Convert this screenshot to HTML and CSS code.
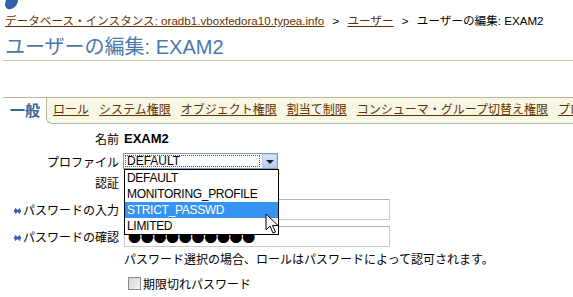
FILE: index.html
```html
<!DOCTYPE html>
<html lang="ja">
<head>
    <meta charset="UTF-8">
    <title>ユーザーの編集: EXAM2</title>
    <link rel="stylesheet" href="styles.css">
</head>
<body>
    <div class="logo-strip">
        <svg width="20" height="10" viewBox="0 0 20 10">
            <path d="M6 0 L18 0 C18 4 15 8 11 9 C8 10 5 8 5 4 Z" fill="#2f62a8"/>
        </svg>
    </div>

    <div class="breadcrumb">
        <a href="#">データベース・インスタンス: oradb1.vboxfedora10.typea.info</a>
        <span class="sep">&gt;</span>
        <a href="#">ユーザー</a>
        <span class="sep">&gt;</span>
        <span>ユーザーの編集: EXAM2</span>
    </div>

    <h1 class="page-title">ユーザーの編集: EXAM2</h1>

    <div class="tabs">
        <div class="tab-current">一般</div>
        <div class="tab-rest">
            <a href="#">ロール</a>
            <a href="#">システム権限</a>
            <a href="#">オブジェクト権限</a>
            <a href="#">割当て制限</a>
            <a href="#">コンシューマ・グループ切替え権限</a>
            <a href="#">プロキシ・ユーザー</a>
        </div>
    </div>

    <div class="user-form">
        <div class="form-row row-name">
            <div class="label">名前</div>
            <div class="value"><b>EXAM2</b></div>
        </div>
        <div class="form-row row-profile">
            <div class="label">プロファイル</div>
            <div class="value">
                <div class="select-box">
                    <div class="select-current">DEFAULT</div>
                    <div class="select-arrow"></div>
                    <ul class="select-list">
                        <li>DEFAULT</li>
                        <li>MONITORING_PROFILE</li>
                        <li class="active">STRICT_PASSWD</li>
                        <li>LIMITED</li>
                    </ul>
                    <!-- mouse pointer over the open list -->
                    <svg class="cursor" width="14" height="22" viewBox="0 0 14 22">
                        <path d="M1 1 L1 17 L5 13 L8 20 L10.5 19 L7.5 12.5 L13 12.5 Z" fill="#fff" stroke="#000" stroke-width="1"/>
                    </svg>
                </div>
            </div>
        </div>
        <div class="form-row row-auth">
            <div class="label">認証</div>
            <div class="value"></div>
        </div>
        <div class="form-row row-pw1">
            <div class="label"><span class="req"><svg width="7" height="6" viewBox="0 0 7 6"><path d="M0 2.3 H7 V3.7 H0 Z M1 0.5 L6 5.5 M6 0.5 L1 5.5" fill="#3b5fc0" stroke="#3b5fc0" stroke-width="1.2"/></svg></span>パスワードの入力</div>
            <div class="value"><div class="text-field"></div></div>
        </div>
        <div class="form-row row-pw2">
            <div class="label"><span class="req"><svg width="7" height="6" viewBox="0 0 7 6"><path d="M0 2.3 H7 V3.7 H0 Z M1 0.5 L6 5.5 M6 0.5 L1 5.5" fill="#3b5fc0" stroke="#3b5fc0" stroke-width="1.2"/></svg></span>パスワードの確認</div>
            <div class="value"><div class="text-field pw-dots">●●●●●●●●●●</div></div>
        </div>
        <div class="form-row row-hint">
            <div class="label"></div>
            <div class="value">パスワード選択の場合、ロールはパスワードによって認可されます。</div>
        </div>
        <div class="form-row row-expire">
            <div class="label"></div>
            <div class="value">
                <label class="check"><input type="checkbox">期限切れパスワード</label>
            </div>
        </div>
    </div>
</body>
</html>
```

FILE: styles.css
```css
body {
    margin: 0;
    font-family: "Liberation Sans", "Noto Sans CJK JP", sans-serif;
    font-size: 12px;
    color: #000;
    background: #fff;
    overflow: hidden;
}
a {
    color: #663300;
}
.logo-strip {
    height: 10px;
    line-height: 0;
}
.breadcrumb {
    padding: 4px 5px 0;
    font-size: 11.6px;
    line-height: 14px;
    white-space: nowrap;
}
.breadcrumb .sep {
    margin: 0 5px;
}
.page-title {
    margin: 7px 0 0 3px;
    padding: 0 0 1px 2px;
    font-size: 20px;
    line-height: 24px;
    font-weight: normal;
    color: #4a78ad;
    border-bottom: 1px solid #c8c5aa;
}
.tabs {
    display: flex;
    margin: 36px 0 0 3px;
    border-top: 1px solid #b8b69a;
    height: 26px;
    white-space: nowrap;
}
.tab-current {
    padding: 3px 6px 0 7px;
    font-size: 15px;
    font-weight: bold;
    color: #336699;
    line-height: 20px;
}
.tab-rest {
    flex: 1;
    display: flex;
    gap: 10px;
    padding: 4px 0 0 6px;
    background: #f7f7e6;
    border-left: 1px solid #b8b69a;
    border-bottom: 1px solid #b8b69a;
    border-bottom-left-radius: 6px;
    line-height: 16px;
    overflow: hidden;
}
.user-form {
    margin-top: 7px;
}
.form-row {
    display: flex;
    align-items: center;
}
.form-row .label {
    width: 119px;
    padding-right: 5px;
    text-align: right;
    white-space: nowrap;
}
.form-row .value {
    white-space: nowrap;
}
.row-name {
    height: 14px;
}
.row-name b {
    font-size: 13px;
}
.row-profile {
    margin-top: 8px;
    height: 16px;
}
.row-auth {
    margin-top: 6px;
    height: 14px;
}
.row-pw1 {
    margin-top: 10px;
}
.row-pw2 {
    margin-top: 6px;
}
.row-hint {
    margin-top: 4px;
    height: 14px;
}
.row-expire {
    margin-top: 11px;
    height: 14px;
}
.req {
    display: inline-block;
    margin-right: 2px;
    vertical-align: 1px;
}
.select-box {
    position: relative;
    width: 153px;
    height: 14px;
    border: 1px solid #7f9db9;
    display: flex;
    margin-left: -1px;
}
.select-current {
    flex: 1;
    margin: 1px 2px 1px 1px;
    border: 1px dotted #555;
    line-height: 10px;
    font-size: 12px;
    padding-left: 1px;
}
.select-arrow {
    width: 15px;
    background: linear-gradient(#d6e4fb, #b4cbf3);
    border: 1px solid #b9cdf2;
    box-sizing: border-box;
    position: relative;
}
.select-arrow::after {
    content: "";
    position: absolute;
    left: 3px;
    top: 5px;
    border-left: 4px solid transparent;
    border-right: 4px solid transparent;
    border-top: 4px solid #222;
}
.select-list {
    position: absolute;
    top: 15px;
    left: 0;
    width: 153px;
    margin: 0;
    padding: 0;
    list-style: none;
    background: #fff;
    border: 1px solid #000;
    z-index: 2;
}
.select-list li {
    height: 16px;
    line-height: 16px;
    padding-left: 2px;
    letter-spacing: -0.3px;
}
.select-list li.active {
    background: #3793f1;
    color: #fff;
}
.cursor {
    position: absolute;
    left: 141px;
    top: 59px;
    z-index: 3;
}
.text-field {
    width: 266px;
    height: 21px;
    box-sizing: border-box;
    border: 1px solid #c9c9c9;
    border-top-color: #b5b5b5;
}
.pw-dots {
    font-family: "Noto Sans CJK JP", sans-serif;
    font-size: 13px;
    line-height: 19px;
    padding-left: 3px;
    letter-spacing: -0.3px;
    overflow: hidden;
}
.check {
    display: flex;
    align-items: center;
    gap: 2px;
    padding-left: 4px;
}
.check input {
    appearance: none;
    margin: 0;
    width: 13px;
    height: 13px;
    border: 1px solid #8a8a8a;
    background: linear-gradient(135deg, #d8d8d8, #f2f2f2);
}
```
